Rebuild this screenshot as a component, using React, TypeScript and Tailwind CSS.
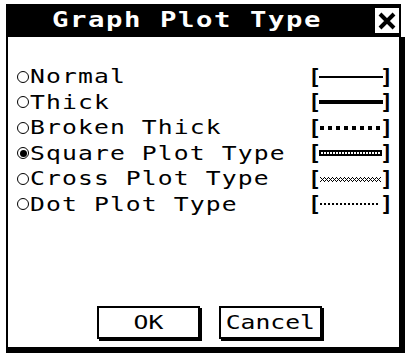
import React from 'react';

const mono = { fontFamily: '"DejaVu Sans Mono", "Liberation Mono", monospace' };

const options = [
  { label: 'Normal', kind: 'normal' },
  { label: 'Thick', kind: 'thick' },
  { label: 'Broken Thick', kind: 'broken' },
  { label: 'Square Plot Type', kind: 'square', selected: true },
  { label: 'Cross Plot Type', kind: 'cross' },
  { label: 'Dot Plot Type', kind: 'dot' },
];

const range = (n: number) => Array.from({ length: n }, (_, i) => i);

// 5-row "x" stitch used by the cross plot sample
const crossPixels: [number, number][] = [];
range(61).forEach((x) => {
  range(5).forEach((r) => {
    const m = x % 4;
    const hit = r === 0 || r === 4 ? m === 0 : r === 2 ? m === 2 : m === 1 || m === 3;
    if (hit) crossPixels.push([x + 1, 7 + r]);
  });
});

const LineSample: React.FC<{ kind: string }> = ({ kind }) => (
  <svg width="64" height="18" viewBox="0 0 64 18" shapeRendering="crispEdges">
    {kind === 'normal' && <rect x="0" y="8" width="64" height="2" fill="#000" />}
    {kind === 'thick' && <rect x="0" y="7" width="64" height="4" fill="#000" />}
    {kind === 'broken' &&
      range(8).map((i) => <rect key={i} x={1 + i * 8} y="7" width="4" height="4" fill="#000" />)}
    {kind === 'square' && (
      <g>
        <rect x="0" y="6" width="63" height="6" fill="#000" />
        {range(20).map((i) => (
          <rect key={i} x={2 + i * 3} y="8" width="2" height="2" fill="#fff" />
        ))}
      </g>
    )}
    {kind === 'cross' &&
      crossPixels.map(([x, y], i) => <rect key={i} x={x} y={y} width="1" height="1" fill="#000" />)}
    {kind === 'dot' &&
      range(15).map((i) => <rect key={i} x={1 + i * 4} y="8" width="2" height="2" fill="#000" />)}
  </svg>
);

const Radio: React.FC<{ selected?: boolean }> = ({ selected }) => (
  <div className="w-[12px] h-[12px] rounded-full border-[1.5px] border-black flex items-center justify-center shrink-0">
    {selected && <div className="w-[7px] h-[7px] rounded-full bg-black" />}
  </div>
);

const Bracket: React.FC<{ ch: string }> = ({ ch }) => (
  <span className="w-[7px] flex justify-center text-[22px] font-bold leading-none">{ch}</span>
);

const App: React.FC = () => {
  return (
    <div className="w-[409px] h-[356px] bg-white pt-[4px] pl-[6px] overflow-hidden" style={mono}>
      <div className="w-[399px] flex flex-col">
        <div className="w-[395px] h-[33px] bg-black flex items-center pl-[46px] pr-[2px]">
          <span className="inline-block origin-left scale-x-[1.3] text-white font-bold text-[21px] tracking-[1.2px] leading-none whitespace-nowrap">
            Graph Plot Type
          </span>
          <div className="ml-auto w-[24px] h-[25px] bg-white flex items-center justify-center">
            <svg width="18" height="18" viewBox="0 0 18 18">
              <path d="M2 2 L16 16 M16 2 L2 16" stroke="#000" strokeWidth="4" />
            </svg>
          </div>
        </div>

        <div className="h-[316px] border-l-2 border-r-[6px] border-b-[6px] border-black flex flex-col pt-[27px] pl-[9px] pr-[9px]">
          {options.map((opt) => (
            <div key={opt.label} className="h-[25.5px] flex items-center">
              <Radio selected={opt.selected} />
              <span className="ml-[1px] inline-block origin-left scale-x-[1.3] text-[19px] tracking-[0.85px] leading-none text-black whitespace-nowrap">
                {opt.label}
              </span>
              <div className="ml-auto flex items-center">
                <Bracket ch="[" />
                <div className="ml-[1px]">
                  <LineSample kind={opt.kind} />
                </div>
                <Bracket ch="]" />
              </div>
            </div>
          ))}

          <div className="mt-auto mb-[8px] flex pl-[80px] gap-[19px]">
            <button className="w-[103px] h-[33px] border-2 border-black bg-white shadow-[2px_2px_0_#000] flex items-center justify-center">
              <span className="inline-block scale-x-[1.3] text-[19px] leading-none text-black">OK</span>
            </button>
            <button className="w-[103px] h-[33px] border-2 border-black bg-white shadow-[2px_2px_0_#000] flex items-center justify-center">
              <span className="inline-block scale-x-[1.3] text-[19px] leading-none text-black">Cancel</span>
            </button>
          </div>
        </div>
      </div>
    </div>
  );
};

export default App;
